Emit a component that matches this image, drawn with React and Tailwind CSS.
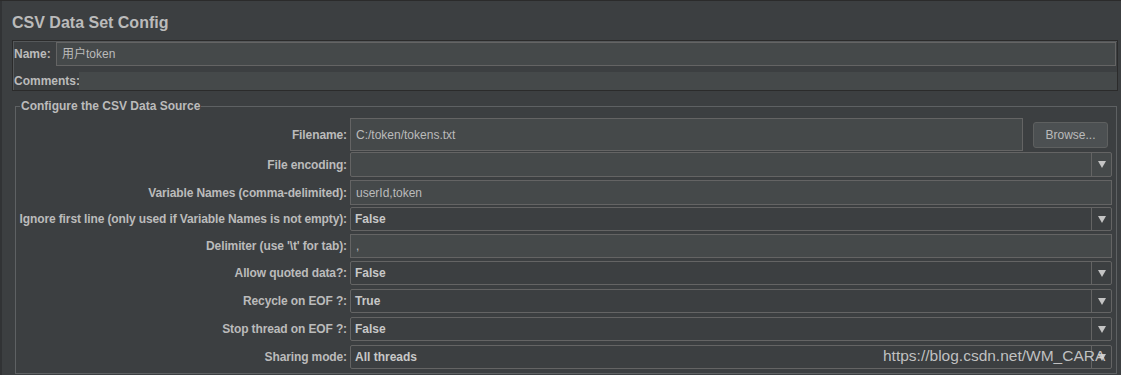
const rows = [
  { label: 'File encoding:', kind: 'edit-combo', value: '', mt: 'mt-[1px]', h: 'h-[25px]' },
  { label: 'Variable Names (comma-delimited):', kind: 'text', value: 'userId,token', mt: 'mt-[3px]', h: 'h-[25px]' },
  { label: 'Ignore first line (only used if Variable Names is not empty):', kind: 'combo', value: 'False', mt: 'mt-[2px]', h: 'h-[24px]' },
  { label: "Delimiter (use '\\t' for tab):", kind: 'text', value: ',', mt: 'mt-[3px]', h: 'h-[24px]' },
  { label: 'Allow quoted data?:', kind: 'combo', value: 'False', mt: 'mt-[3px]', h: 'h-[24px]' },
  { label: 'Recycle on EOF ?:', kind: 'combo', value: 'True', mt: 'mt-[4px]', h: 'h-[24px]' },
  { label: 'Stop thread on EOF ?:', kind: 'combo', value: 'False', mt: 'mt-[4px]', h: 'h-[24px]' },
  { label: 'Sharing mode:', kind: 'combo', value: 'All threads', mt: 'mt-[4px]', h: 'h-[24px]' }
];

function Arrow() {
  return (
    <div className="flex w-[20px] items-center justify-center border-l border-[#646464]">
      <svg width="8" height="7" viewBox="0 0 8 7">
        <polygon points="0,0 8,0 4,7" fill="#c4c4c4" />
      </svg>
    </div>
  );
}

function Field({ row }) {
  if (row.kind === 'text') {
    return (
      <div className="flex flex-1 items-center border border-[#646464] bg-[#45494a] pl-[5px]">
        {row.value}
      </div>
    );
  }
  const editable = row.kind === 'edit-combo';
  return (
    <div
      className={`flex flex-1 rounded-[2px] border border-[#646464] ${editable ? 'bg-[#45494a]' : 'bg-[#3c3f41]'}`}
    >
      <div className="flex flex-1 items-center pl-[4px] font-bold text-[#c8c8c8]">{row.value}</div>
      <Arrow />
    </div>
  );
}

export default function App() {
  return (
    <div className="relative h-[375px] w-[1121px] overflow-hidden border-t border-[#2b2b2b] bg-[#3c3f41] font-['Liberation_Sans','Noto_Sans_CJK_SC',Arial,sans-serif] text-[12px] leading-[14px] text-[#bbbbbb]">
      <div className="flex h-full">
        <div className="w-[2px] bg-[#313335]" />
        <div className="flex flex-1 flex-col pl-[10px]">
          <div className="h-[39px] pt-[12px] text-[16px] font-bold leading-[20px] text-[#bbbbbb]">
            CSV Data Set Config
          </div>

          <div className="flex w-[1106px] flex-col border border-[#2b2b2b] pt-[1px] shadow-[inset_1px_1px_0_#55585a]">
            <div className="flex h-[24px] pr-[1px]">
              <div className="flex w-[43px] items-center pl-[1px] font-bold">Name:</div>
              <div className="flex flex-1 items-center border border-[#646464] bg-[#45494a] pl-[5px]">
                用户token
              </div>
            </div>
            <div className="mt-[6px] flex h-[18px]">
              <div className="flex w-[66px] items-center pl-[1px] font-bold">Comments:</div>
              <div className="flex-1 bg-[#45494a]" />
            </div>
          </div>

          <fieldset className="ml-[3px] mt-[8px] w-[1102px] border border-[#5e6163] pb-[4px] pr-[4px] pt-[5px]">
            <legend className="ml-[4px] px-[1px] font-bold leading-[14px]">Configure the CSV Data Source</legend>

            <div className="flex h-[33px]">
              <div className="flex w-[334px] items-center justify-end pr-[3px] font-bold tracking-[-0.1px]">Filename:</div>
              <div className="flex w-[673px] items-center border border-[#646464] bg-[#45494a] pl-[5px]">
                C:/token/tokens.txt
              </div>
              <div className="ml-[10px] flex h-[26px] w-[75px] items-center justify-center self-center rounded-[3px] border border-[#5e6060] bg-[#4c5052]">
                Browse...
              </div>
            </div>

            {rows.map((row) => (
              <div key={row.label} className={`flex ${row.mt} ${row.h}`}>
                <div className="flex w-[334px] items-center justify-end whitespace-nowrap pr-[3px] font-bold tracking-[-0.12px]">
                  {row.label}
                </div>
                <Field row={row} />
              </div>
            ))}
          </fieldset>
        </div>
      </div>

      <div className="absolute left-[883px] top-[345px] whitespace-nowrap font-['Liberation_Sans',Arial,sans-serif] text-[15.5px] leading-[20px] text-[#dadada]/85">
        https://blog.csdn.net/WM_CARA
      </div>
    </div>
  );
}
